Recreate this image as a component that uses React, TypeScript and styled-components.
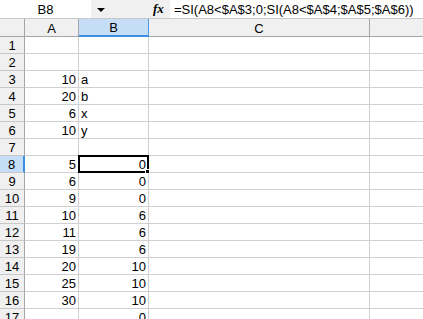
import { createGlobalStyle, styled } from "styled-components"

const Global = createGlobalStyle`
  html, body {
    margin: 0;
    padding: 0;
    background: #ffffff;
    overflow: hidden;
  }
  body {
    font-family: "Liberation Sans", Arial, sans-serif;
    font-size: 13px;
    color: #000000;
  }
`

const Page = styled.div`
  width: 423px;
  height: 319px;
  overflow: hidden;
  display: flex;
  flex-direction: column;
`

const FormulaBar = styled.div`
  height: 19px;
  flex: none;
  display: flex;
  align-items: stretch;
  background: #f0f0f0;
  border-bottom: 1px solid #c8c8c8;
  box-sizing: border-box;
`

const NameBox = styled.div`
  width: 91px;
  height: 18px;
  background: #ffffff;
  display: flex;
  align-items: center;
  justify-content: center;
  font-size: 13px;
`

const DropArrow = styled.div`
  width: 0;
  height: 0;
  margin: 8px 0 0 6px;
  border-left: 4px solid transparent;
  border-right: 4px solid transparent;
  border-top: 4px solid #000000;
`

const Fx = styled.div`
  margin-left: 48px;
  width: 14px;
  display: flex;
  align-items: center;
  font-family: "Liberation Serif", "Times New Roman", serif;
  font-style: italic;
  font-weight: bold;
  font-size: 13px;
`

const FormulaInput = styled.div`
  flex: 1;
  height: 18px;
  margin-left: 3px;
  background: #ffffff;
  display: flex;
  align-items: center;
  padding-left: 4px;
  white-space: nowrap;
  overflow: hidden;
`

const Grid = styled.div`
  display: grid;
  grid-template-columns: 25px 54px 70px 221px 60px;
  grid-auto-rows: 17px;
  grid-template-rows: 18px;
`

const HeadCell = styled.div<{ $active?: boolean }>`
  box-sizing: border-box;
  background: ${(p) => (p.$active ? "#c5ddf7" : "#f0f0f0")};
  border-right: 1px solid ${(p) => (p.$active ? "#4a9ae6" : "#a6a6a6")};
  border-bottom: ${(p) => (p.$active ? "2px solid #3c8ee0" : "1px solid #a6a6a6")};
  display: flex;
  align-items: center;
  justify-content: center;
  padding-top: 1px;
`

const RowHead = styled.div<{ $active?: boolean }>`
  box-sizing: border-box;
  background: ${(p) => (p.$active ? "#c5ddf7" : "#f0f0f0")};
  border-right: ${(p) => (p.$active ? "2px solid #3c8ee0" : "1px solid #a6a6a6")};
  border-bottom: 1px solid #c8c8c8;
  display: flex;
  align-items: center;
  justify-content: center;
`

const Cell = styled.div<{ $align?: "left" | "right" }>`
  position: relative;
  box-sizing: border-box;
  border-right: 1px solid #d0d0d0;
  border-bottom: 1px solid #d0d0d0;
  display: flex;
  align-items: center;
  justify-content: ${(p) => (p.$align === "right" ? "flex-end" : "flex-start")};
  padding: 0 2px;
  white-space: nowrap;
`

const Cursor = styled.div`
  position: absolute;
  left: -1px;
  top: -1px;
  right: -1px;
  bottom: -1px;
  border: 2px solid #000000;
  pointer-events: none;
`

const Handle = styled.div`
  position: absolute;
  right: -3px;
  bottom: -3px;
  width: 5px;
  height: 5px;
  background: #000000;
  border: 1px solid #ffffff;
  box-sizing: border-box;
`

type Row = [string, string]

const rows: Row[] = [
  ["", ""],
  ["", ""],
  ["10", "a"],
  ["20", "b"],
  ["6", "x"],
  ["10", "y"],
  ["", ""],
  ["5", "0"],
  ["6", "0"],
  ["9", "0"],
  ["10", "6"],
  ["11", "6"],
  ["19", "6"],
  ["20", "10"],
  ["25", "10"],
  ["30", "10"],
  ["", "0"],
]

const isNum = (s: string) => /^\d+$/.test(s)

const App = () => {
  return (
    <Page>
      <Global />
      <FormulaBar>
        <NameBox>B8</NameBox>
        <DropArrow />
        <Fx>fx</Fx>
        <FormulaInput>=SI(A8&lt;$A$3;0;SI(A8&lt;$A$4;$A$5;$A$6))</FormulaInput>
      </FormulaBar>
      <Grid>
        <HeadCell />
        <HeadCell>A</HeadCell>
        <HeadCell $active>B</HeadCell>
        <HeadCell>C</HeadCell>
        <HeadCell />
        {rows.map(([a, b], i) => {
          const n = i + 1
          const sel = n === 8
          return [
            <RowHead key={`h${n}`} $active={sel}>{n}</RowHead>,
            <Cell key={`a${n}`} $align="right">{a}</Cell>,
            <Cell key={`b${n}`} $align={isNum(b) ? "right" : "left"}>
              {b}
              {sel && (
                <Cursor>
                  <Handle />
                </Cursor>
              )}
            </Cell>,
            <Cell key={`c${n}`} />,
            <Cell key={`d${n}`} />,
          ]
        })}
      </Grid>
    </Page>
  )
}

export default App
